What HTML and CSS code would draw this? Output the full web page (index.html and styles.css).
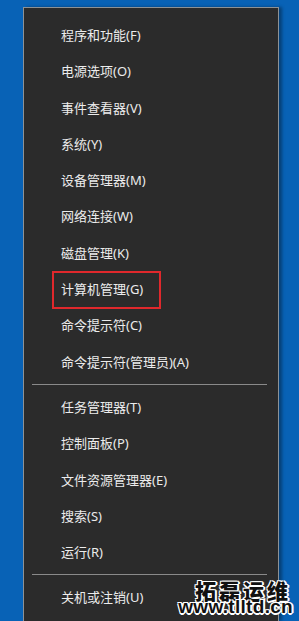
FILE: index.html
```html
<!DOCTYPE html>
<html lang="zh-CN">
<head>
<meta charset="utf-8">
<title>Win+X 菜单</title>
<link rel="stylesheet" href="styles.css">
</head>
<body>
<div class="desktop">
  <div class="menu">
    <div class="item">程序和功能(F)</div>
    <div class="item">电源选项(O)</div>
    <div class="item">事件查看器(V)</div>
    <div class="item">系统(Y)</div>
    <div class="item">设备管理器(M)</div>
    <div class="item">网络连接(W)</div>
    <div class="item">磁盘管理(K)</div>
    <div class="item highlight">计算机管理(G)</div>
    <div class="item">命令提示符(C)</div>
    <div class="item">命令提示符(管理员)(A)</div>
    <div class="sep"></div>
    <div class="item">任务管理器(T)</div>
    <div class="item">控制面板(P)</div>
    <div class="item">文件资源管理器(E)</div>
    <div class="item">搜索(S)</div>
    <div class="item">运行(R)</div>
    <div class="sep"></div>
    <div class="item">关机或注销(U)</div>
  </div>
  <div class="watermark">
    <div class="wm-cn">拓磊运维</div>
    <div class="wm-url">www.tlltd.cn</div>
  </div>
</div>
</body>
</html>
```
FILE: styles.css
```css
html, body {
  margin: 0;
  padding: 0;
  height: 100%;
  overflow: hidden;
}
body {
  background: #0862b6;
  font-family: "Noto Sans", "Noto Sans CJK SC", sans-serif;
}
.desktop {
  position: relative;
  height: 100%;
  padding: 7px 0 0 23px;
  box-sizing: border-box;
  overflow: hidden;
}
.menu {
  box-sizing: border-box;
  width: 256px;
  height: 614px;
  background: #2b2b2b;
  border: 1px solid #8d9296;
  border-bottom: 0;
  padding-top: 9px;
  box-shadow: 3px 0 3px rgba(0, 0, 0, 0.35);
}
.item {
  position: relative;
  height: 36.3px;
  line-height: 36.3px;
  padding-left: 37px;
  font-size: 13px;
  color: #ececec;
  white-space: nowrap;
}
.highlight::after {
  content: "";
  position: absolute;
  left: 28px;
  top: 0;
  width: 105px;
  height: 34px;
  border: 2px solid #e0282c;
}
.sep {
  height: 1px;
  margin: 4px 11px 4px 8px;
  background: #8a8a8a;
}
.watermark {
  position: absolute;
  right: 6px;
  bottom: 7px;
  display: flex;
  flex-direction: column;
  align-items: flex-end;
  color: #111;
  line-height: 1;
}
.wm-cn {
  font-family: "Noto Sans CJK SC", sans-serif;
  font-weight: 900;
  font-size: 21px;
  letter-spacing: 3px;
  margin-right: 2px;
  height: 18px;
  line-height: 18px;
  text-shadow: -1px -1px 0 #fff, 1px -1px 0 #fff, -1px 1px 0 #fff, 1px 1px 0 #fff, 0 2px 0 #fff, 2px 0 0 #fff;
}
.wm-url {
  font-family: "Liberation Sans", Arial, sans-serif;
  font-weight: bold;
  font-size: 19px;
  letter-spacing: 0.3px;
  height: 14px;
  line-height: 14px;
  margin-top: 1px;
  text-shadow: -1px -1px 0 #fff, 1px -1px 0 #fff, -1px 1px 0 #fff, 1px 1px 0 #fff, 0 2px 0 #fff, 2px 0 0 #fff;
}
```
